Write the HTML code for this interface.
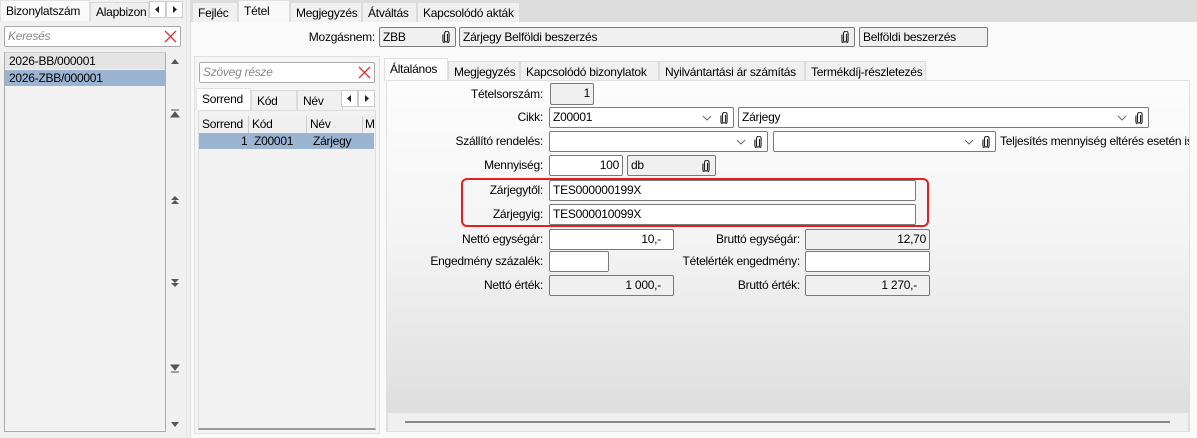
<!DOCTYPE html>
<html><head><meta charset="utf-8"><style>
*{box-sizing:border-box;margin:0;padding:0}
body{width:1197px;height:438px;background:#f0f0f0;font-family:"Liberation Sans",sans-serif;font-size:12px;letter-spacing:-0.25px;color:#000;position:relative;overflow:hidden}
.a{position:absolute;white-space:nowrap}
.tab{position:absolute;height:21px;line-height:20px;padding-left:5px;border:1px solid #dadada;border-bottom:none;background:#f0f0f0;overflow:hidden;white-space:nowrap}
.tab.on{background:#fafafa;border-color:#e0e0e0}
.f{position:absolute;height:21px;border:1px solid #7a7a7a;background:#fff;line-height:19px;padding:0 3px;border-radius:2px;overflow:hidden;white-space:nowrap}
.g{background:#f0f0f0}
.r{text-align:right}
.lb{position:absolute;text-align:right;white-space:nowrap;line-height:20px}
.clip{position:absolute;right:5px;top:4px;width:8px;height:12px}
.dd{position:absolute;right:21px;top:7px;width:10px;height:6px}
.arr{position:absolute;width:17px;height:17px;border:1px solid #ccc;background:#fff}
.sb{position:absolute;left:170px;width:10px}
</style></head><body>
<svg width="0" height="0" style="position:absolute"><defs>
<symbol id="clip" viewBox="0 0 8 12"><path d="M5.5 3V9.5a1.5 1.5 0 0 1-3 0V2.5a2.3 2.3 0 0 1 4.6 0V9.5a3.1 3.1 0 0 1-6.2 0V3.5" fill="none" stroke="#222" stroke-width="1.1"/></symbol>
<symbol id="dd" viewBox="0 0 10 6"><path d="M1 1l4 4 4-4" fill="none" stroke="#666" stroke-width="1"/></symbol>
<symbol id="la" viewBox="0 0 15 15"><path d="M9 4v7L5 7.5z" fill="#222"/></symbol>
<symbol id="ra" viewBox="0 0 15 15"><path d="M6 4v7l4-3.5z" fill="#222"/></symbol>
</defs></svg>
<!-- left panel -->
<div class="tab on" style="left:0;top:0;width:90px">Bizonylatszám</div>
<div class="tab" style="left:90px;top:2px;width:59px;height:19px;line-height:18px">Alapbizon</div>
<div class="arr" style="left:149px;top:1px"><svg width="15" height="15"><use href="#la"/></svg></div><div class="arr" style="left:166px;top:1px"><svg width="15" height="15"><use href="#ra"/></svg></div>
<div class="f" style="left:4px;top:26px;width:177px;height:21px;border-color:#aaa;color:#888;font-style:italic">Keresés<svg style="position:absolute;right:3px;top:3px" width="13" height="13"><path d="M1 1l11 11M12 1L1 12" stroke="#e03030" stroke-width="1.3"/></svg></div>
<div class="a" style="left:4px;top:52px;width:162px;height:380px;border:1px solid #aaa;border-top:1px solid #ccc;background:#f2f2f2"></div>
<div class="a" style="left:5px;top:53px;width:160px;height:16px;background:#e4e4e4;padding-left:4px;line-height:16px">2026-BB/000001</div>
<div class="a" style="left:5px;top:70px;width:160px;height:16px;background:#9ab4d2;padding-left:4px;line-height:16px">2026-ZBB/000001</div>
<svg class="sb" style="top:58px" width="10" height="8"><path d="M1 6h8L5 1z" fill="#555"/></svg>
<svg class="sb" style="top:109px" width="10" height="9"><path d="M1 1h8M1 8h8L5 3z" stroke="#555" fill="#555"/></svg>
<svg class="sb" style="top:195px" width="10" height="10"><path d="M1 5h8L5 1zM1 9h8L5 5z" fill="#555"/></svg>
<svg class="sb" style="top:278px" width="10" height="10"><path d="M1 1h8L5 5zM1 5h8L5 9z" fill="#555"/></svg>
<svg class="sb" style="top:364px" width="10" height="9"><path d="M1 1h8L5 6zM1 8h8" stroke="#555" fill="#555"/></svg>
<svg class="sb" style="top:420px" width="10" height="8"><path d="M1 2h8L5 7z" fill="#555"/></svg>
<div class="a" style="left:186px;top:0;width:1px;height:438px;background:#e2e2e2"></div>
<!-- top tabs -->
<div class="a" style="left:190px;top:0;width:1007px;height:22px;background:#dcdcdc"></div>
<div class="tab" style="left:192px;top:2px;width:46px;height:20px">Fejléc</div>
<div class="tab on" style="left:238px;top:0;width:52px;height:22px;background:#f8f8f8">Tétel</div>
<div class="tab" style="left:290px;top:2px;width:72px;height:20px">Megjegyzés</div>
<div class="tab" style="left:362px;top:2px;width:55px;height:20px">Átváltás</div>
<div class="tab" style="left:417px;top:2px;width:103px;height:20px">Kapcsolódó akták</div>
<div class="a" style="left:190px;top:22px;width:1007px;height:416px;background:#fafafa;border-left:1px solid #e0e0e0"></div>
<div class="lb" style="left:290px;top:27px;width:85px">Mozgásnem:</div>
<div class="f g" style="left:379px;top:27px;width:77px;height:20px;line-height:18px">ZBB<svg class="clip" style="top:3px"><use href="#clip"/></svg></div>
<div class="f g" style="left:459px;top:27px;width:396px;height:20px;line-height:18px">Zárjegy Belföldi beszerzés<svg class="clip" style="top:3px"><use href="#clip"/></svg></div>
<div class="f g" style="left:859px;top:27px;width:129px;height:20px;line-height:18px">Belföldi beszerzés</div>
<!-- middle panel -->
<div class="a" style="left:194px;top:56px;width:186px;height:378px;border:1px solid #e0e0e0;background:#f5f5f5"></div>
<div class="f" style="left:199px;top:62px;width:176px;height:21px;border-color:#aaa;color:#888;font-style:italic">Szöveg része<svg style="position:absolute;right:3px;top:3px" width="13" height="13"><path d="M1 1l11 11M12 1L1 12" stroke="#e03030" stroke-width="1.3"/></svg></div>
<div class="tab on" style="left:196px;top:88px;width:55px;height:22px;background:#fff">Sorrend</div>
<div class="tab" style="left:251px;top:90px;width:46px;height:20px">Kód</div>
<div class="tab" style="left:297px;top:90px;width:46px;height:20px">Név</div>
<div class="arr" style="left:341px;top:90px"><svg width="15" height="15"><use href="#la"/></svg></div><div class="arr" style="left:358px;top:90px"><svg width="15" height="15"><use href="#ra"/></svg></div>
<div class="a" style="left:198px;top:110px;width:178px;height:320px;border:1px solid #ddd;border-bottom:2px solid #999;background:#f2f2f2"></div>
<div class="a" style="left:199px;top:116px;width:175px;height:17px;background:#f0f0f0;line-height:17px;overflow:hidden">
<span class="a" style="left:3px">Sorrend</span><span class="a" style="left:49px;border-left:1px solid #ccc;padding-left:3px">Kód</span><span class="a" style="left:107px;border-left:1px solid #ccc;padding-left:3px">Név</span><span class="a" style="left:163px;border-left:1px solid #ccc;padding-left:2px">M</span></div>
<div class="a" style="left:199px;top:133px;width:175px;height:16px;background:#9ab4d2;line-height:16px"><span class="a" style="left:42px">1</span><span class="a" style="left:55px">Z00001</span><span class="a" style="left:114px">Zárjegy</span></div>
<!-- right inner tabs -->
<div class="tab on" style="left:384px;top:58px;width:64px;height:23px;background:#fcfcfc">Általános</div>
<div class="tab" style="left:448px;top:61px;width:72px;height:20px">Megjegyzés</div>
<div class="tab" style="left:520px;top:61px;width:139px;height:20px">Kapcsolódó bizonylatok</div>
<div class="tab" style="left:659px;top:61px;width:146px;height:20px">Nyilvántartási ár számítás</div>
<div class="tab" style="left:805px;top:61px;width:121px;height:20px">Termékdíj-részletezés</div>
<div class="a" style="left:386px;top:80px;width:804px;height:352px;border:1px solid #e0e0e0;background:linear-gradient(#fcfcfc 0%,#f4f4f4 45%,#dfdfdf 92%)"></div>
<div class="a" style="left:388px;top:413px;width:800px;height:18px;background:#f0f0f0"></div>
<div class="a" style="left:405px;top:421px;width:765px;height:2px;background:#888"></div>
<!-- form -->
<div class="lb" style="left:400px;top:84px;width:143px">Tételsorszám:</div>
<div class="f g r" style="left:550px;top:83px;width:44px;height:22px">1</div>
<div class="lb" style="left:400px;top:107px;width:143px">Cikk:</div>
<div class="f" style="left:549px;top:107px;width:185px">Z00001<svg class="dd"><use href="#dd"/></svg><svg class="clip"><use href="#clip"/></svg></div>
<div class="f" style="left:738px;top:107px;width:411px">Zárjegy<svg class="dd"><use href="#dd"/></svg><svg class="clip"><use href="#clip"/></svg></div>
<div class="lb" style="left:400px;top:131px;width:143px">Szállító rendelés:</div>
<div class="f" style="left:549px;top:131px;width:219px"><svg class="dd"><use href="#dd"/></svg><svg class="clip"><use href="#clip"/></svg></div>
<div class="f" style="left:773px;top:131px;width:223px"><svg class="dd"><use href="#dd"/></svg><svg class="clip"><use href="#clip"/></svg></div>
<div class="a" style="left:1000px;top:131px;line-height:20px;width:189px;overflow:hidden">Teljesítés mennyiség eltérés esetén is</div>
<div class="lb" style="left:400px;top:155px;width:143px">Mennyiség:</div>
<div class="f r" style="left:549px;top:155px;width:74px">100</div>
<div class="f g" style="left:627px;top:155px;width:89px">db<svg class="clip"><use href="#clip"/></svg></div>
<div class="a" style="left:461px;top:178px;width:468px;height:49px;border:2px solid #e02020;border-radius:6px"></div>
<div class="lb" style="left:400px;top:180px;width:143px">Zárjegytől:</div>
<div class="f" style="left:549px;top:180px;width:367px">TES000000199X</div>
<div class="lb" style="left:400px;top:204px;width:143px">Zárjegyig:</div>
<div class="f" style="left:549px;top:204px;width:367px">TES000010099X</div>
<div class="lb" style="left:400px;top:229px;width:143px">Nettó egységár:</div>
<div class="f r" style="left:549px;top:229px;width:125px;padding-right:12px">10,-</div>
<div class="lb" style="left:650px;top:229px;width:150px">Bruttó egységár:</div>
<div class="f g r" style="left:805px;top:229px;width:125px">12,70</div>
<div class="lb" style="left:400px;top:251px;width:143px">Engedmény százalék:</div>
<div class="f" style="left:549px;top:251px;width:60px"></div>
<div class="lb" style="left:650px;top:251px;width:150px">Tételérték engedmény:</div>
<div class="f" style="left:805px;top:251px;width:125px"></div>
<div class="lb" style="left:400px;top:275px;width:143px">Nettó érték:</div>
<div class="f g r" style="left:549px;top:275px;width:125px;padding-right:12px">1 000,-</div>
<div class="lb" style="left:650px;top:275px;width:150px">Bruttó érték:</div>
<div class="f g r" style="left:805px;top:275px;width:125px;padding-right:12px">1 270,-</div>
</body></html>
